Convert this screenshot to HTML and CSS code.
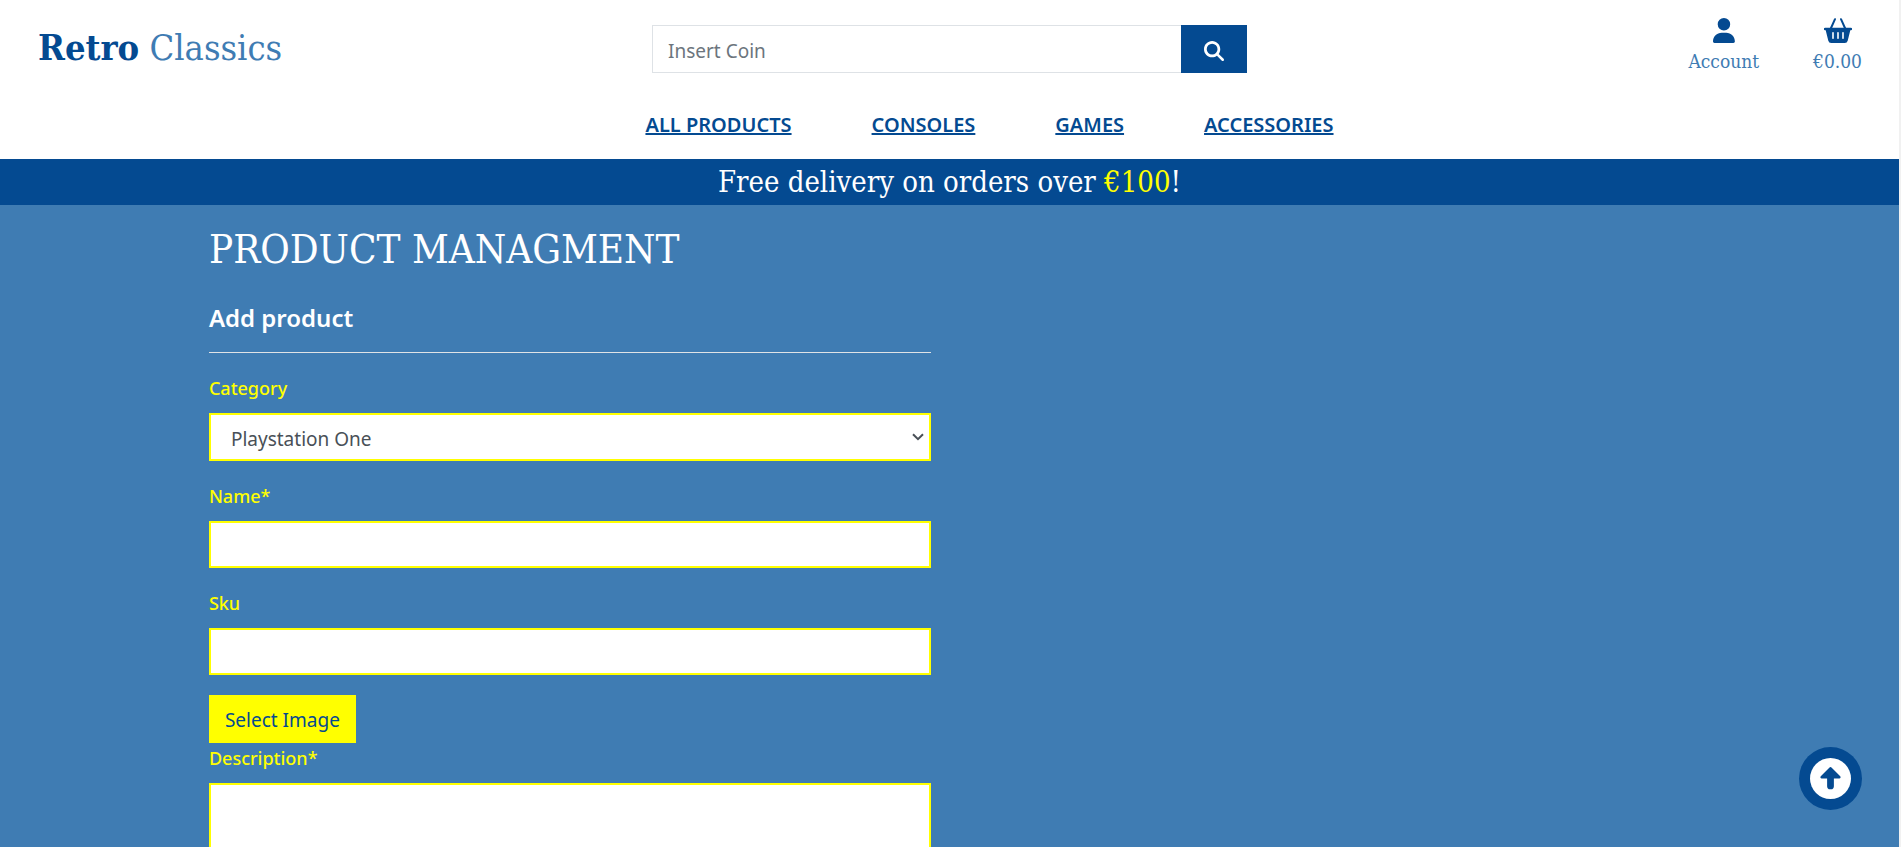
FILE: index.html
```html
<!DOCTYPE html>
<html lang="en">
<head>
<meta charset="utf-8">
<meta name="viewport" content="width=device-width, initial-scale=1">
<title>Retro Classics</title>
<link rel="stylesheet" href="styles.css">
</head>
<body>
<header class="site-header">
  <div class="top-row">
    <a class="logo" href="#"><strong class="logo-strong">Retro</strong> <span class="logo-light">Classics</span></a>
    <form class="search" role="search">
      <input class="search-input" type="text" placeholder="Insert Coin" aria-label="Search products">
      <button class="search-button" type="button" aria-label="Search">
        <svg class="search-icon" viewBox="0 0 512 512" fill="currentColor" aria-hidden="true"><path d="M416 208c0 45.9-14.9 88.3-40 122.7L502.6 457.4c12.5 12.5 12.5 32.8 0 45.3s-32.8 12.5-45.3 0L330.7 376c-34.4 25.2-76.8 40-122.7 40C93.1 416 0 322.9 0 208S93.1 0 208 0S416 93.1 416 208zM208 346a138 138 0 1 0 0-276 138 138 0 1 0 0 276z"/></svg>
      </button>
    </form>
    <div class="user-links">
      <a class="user-link" href="#">
        <svg class="user-icon" viewBox="0 0 448 512" fill="currentColor" aria-hidden="true"><path d="M224 256A128 128 0 1 0 224 0a128 128 0 1 0 0 256zm-45.7 48C79.8 304 0 383.8 0 482.3C0 498.7 13.3 512 29.7 512H418.3c16.4 0 29.7-13.3 29.7-29.7C448 383.8 368.2 304 269.7 304H178.3z"/></svg>
        <span>Account</span>
      </a>
      <a class="user-link" href="#">
        <svg class="user-icon" viewBox="0 0 28 25" aria-hidden="true">
          <path d="M11 1.200 6.800 10.500M17 1.200l4.200 9.300" fill="none" stroke="currentColor" stroke-width="2" stroke-linecap="round"/>
          <path fill="currentColor" fill-rule="evenodd" d="M1.200 9.700h25.600a1.200 1.200 0 0 1 .2 2.500h-.7l-2.600 10.500A3 3 0 0 1 20.800 25H7.200a3 3 0 0 1-2.900-2.300L1.700 12.200H1a1.200 1.200 0 0 1 .2-2.500zM9 14a.8.8 0 0 0-.8.8v5.400a.8.8 0 0 0 1.600 0v-5.400A.8.8 0 0 0 9 14zm5 0a.8.8 0 0 0-.8.8v5.400a.8.8 0 0 0 1.600 0v-5.400A.8.8 0 0 0 14 14zm5 0a.8.8 0 0 0-.8.8v5.400a.8.8 0 0 0 1.600 0v-5.400A.8.8 0 0 0 19 14z"/>
        </svg>
        <span>€0.00</span>
      </a>
    </div>
  </div>
  <nav aria-label="Shop">
    <ul class="nav-list">
      <li><a class="nav-link" href="#">ALL PRODUCTS</a></li>
      <li><a class="nav-link" href="#">CONSOLES</a></li>
      <li><a class="nav-link" href="#">GAMES</a></li>
      <li><a class="nav-link" href="#">ACCESSORIES</a></li>
    </ul>
  </nav>
</header>
<p class="banner">Free delivery on orders over <span class="banner-price">€100</span>!</p>
<main class="container">
  <div class="column">
    <h1 class="page-title">PRODUCT MANAGMENT</h1>
    <h2 class="section-title">Add product</h2>
    <hr class="rule">
    <form>
      <div class="field">
        <label class="label" for="category">Category</label>
        <div class="select-wrap">
          <select class="control select" id="category"><option>Playstation One</option></select>
          <svg class="chevron" viewBox="0 0 12 8" fill="none" stroke="currentColor" stroke-width="2" aria-hidden="true"><path d="m1 1.200 5 5 5-5"/></svg>
        </div>
      </div>
      <div class="field">
        <label class="label" for="name">Name*</label>
        <input class="control" id="name" type="text">
      </div>
      <div class="field">
        <label class="label" for="sku">Sku</label>
        <input class="control" id="sku" type="text">
      </div>
      <button class="image-button" type="button">Select Image</button>
      <div class="field">
        <label class="label" for="description">Description*</label>
        <textarea class="control textarea" id="description"></textarea>
      </div>
    </form>
  </div>
</main>
<a class="to-top" href="#" aria-label="Back to top">
  <svg class="to-top-icon" viewBox="0 0 40 40" aria-hidden="true">
    <circle cx="20" cy="20" r="20" fill="#fff"/>
    <path fill="currentColor" d="M18.800 9.500a1.700 1.700 0 0 1 2.400 0l8.300 8.300a1.300 1.300 0 0 1-.9 2.200h-5.300v7.500a3 3 0 0 1-3 3h-.6a3 3 0 0 1-3-3V20h-5.300a1.300 1.300 0 0 1-.9-2.200z"/>
  </svg>
</a>
</body>
</html>
```
FILE: styles.css
```css
:root {
  --navy: #044a91;
  --blue: #3f7cb3;
  --yellow: #ffff00;
  --sans: "Segoe UI", "Noto Sans", "Open Sans", sans-serif;
  --slab: "Roboto Slab", "DejaVu Serif Condensed", "DejaVu Serif", serif;
}

* { box-sizing: border-box; }

html {
  height: 100%;
  overflow: hidden;
}

body {
  height: 100%;
  margin: 0;
  overflow: hidden;
  border-right: 2px solid #f1f1f1;
  background: var(--blue);
  font: 19px/30px var(--sans);
}

.site-header {
  padding-bottom: 19px;
  background: #fff;
}

.top-row {
  display: grid;
  grid-template-columns: 1fr 1fr 1fr;
  align-items: start;
  padding-top: 16px;
}

.logo {
  padding: 7px 0 0 38px;
  font: 36px/48px var(--slab);
  text-decoration: none;
  white-space: nowrap;
  color: var(--blue);
}

.logo-strong { color: var(--navy); }

.search {
  display: flex;
  padding: 9px 19px 0;
}

.search-input {
  flex: 1;
  min-width: 0;
  height: 48px;
  padding: 4px 15px 0;
  border: 1px solid #dee2e6;
  border-right: 0;
  font: inherit;
}

.search-input::placeholder { color: #6c757d; opacity: 1; }

.search-button {
  display: flex;
  align-items: center;
  justify-content: center;
  width: 66px;
  padding: 4px 0 0;
  border: 0;
  background: var(--navy);
  color: #fff;
}

.search-icon { width: 20px; height: 20px; }

.user-links {
  display: flex;
  justify-content: flex-end;
  gap: 54px;
  padding-right: 37px;
}

.user-link {
  display: flex;
  flex-direction: column;
  align-items: center;
  padding-top: 2px;
  font: 19px/36px var(--slab);
  text-decoration: none;
  color: var(--blue);
}

.user-icon { height: 25px; color: var(--navy); }

.nav-list {
  display: flex;
  justify-content: center;
  gap: 80px;
  margin: 0;
  padding: 31px 0 0 80px;
  list-style: none;
}

.nav-link {
  font-size: 20px;
  font-weight: 600;
  color: var(--navy);
  text-decoration-thickness: 2px;
}

.banner {
  margin: 0;
  background: var(--navy);
  color: #fff;
  font: 29px/46px var(--slab);
  text-align: center;
}

.banner-price { color: var(--yellow); }

.container {
  width: 80%;
  margin: 0 auto;
}

.column {
  width: 50%;
  padding: 20px 19px 0;
}

.page-title {
  margin: 0;
  color: #fff;
  font: 40px/48px var(--slab);
  white-space: nowrap;
}

.section-title {
  margin: 30px 0 0;
  color: #fff;
  font-size: 24px;
  font-weight: 600;
  line-height: 30px;
}

.rule {
  margin: 19px 0 20px;
  border: 0;
  border-top: 1px solid #e0e3e6;
}

.field { margin-bottom: 20px; }

.label {
  display: block;
  margin-bottom: 10px;
  color: var(--yellow);
  font-size: 18px;
  font-weight: 500;
}

.control {
  display: block;
  width: 100%;
  height: 47px;
  padding: 6px 14px;
  border: 2px solid var(--yellow);
  border-radius: 0;
  background: #fff;
  color: #495057;
  font: inherit;
}

.select-wrap { position: relative; color: #495057; }

.select {
  height: 48px;
  padding: 4px 20px 0;
  appearance: none;
}

.chevron {
  position: absolute;
  top: 20px;
  right: 7px;
  width: 12px;
  height: 8px;
  pointer-events: none;
}

.textarea { height: 160px; resize: none; }

.image-button {
  display: block;
  height: 48px;
  padding: 2px 16px 0;
  border: 0;
  background: var(--yellow);
  color: var(--navy);
  font: inherit;
}

.to-top {
  position: fixed;
  right: 39px;
  bottom: 37px;
  display: flex;
  align-items: center;
  justify-content: center;
  width: 63px;
  height: 63px;
  border-radius: 50%;
  background: var(--navy);
  color: var(--navy);
}

.to-top-icon { width: 41px; height: 41px; }
```
